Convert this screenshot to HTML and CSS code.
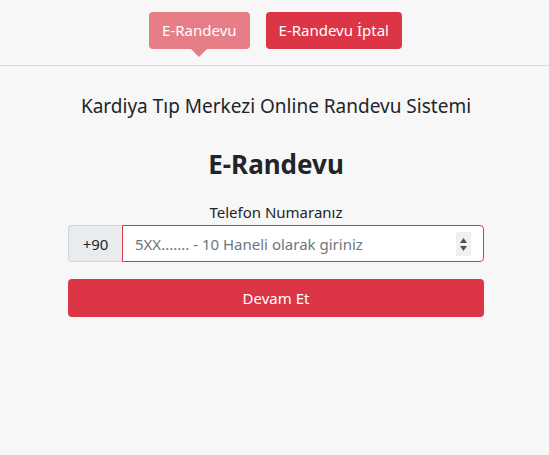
FILE: index.html
```html
<!DOCTYPE html>
<html lang="tr">
<head>
<meta charset="utf-8">
<link rel="stylesheet" href="styles.css">
</head>
<body>
<nav class="topnav">
  <a class="tab tab-active">E-Randevu</a>
  <a class="tab">E-Randevu İptal</a>
</nav>
<main class="content">
  <h5 class="subtitle">Kardiya Tıp Merkezi Online Randevu Sistemi</h5>
  <h3 class="title">E-Randevu</h3>
  <label class="label" for="tel">Telefon Numaranız</label>
  <div class="input-group">
    <span class="prefix">+90</span>
    <div class="field">
      <input id="tel" class="input" type="text" placeholder="5XX....... - 10 Haneli olarak giriniz">
      <span class="spinner">
        <svg width="9" height="18" viewBox="0 0 9 18"><path d="M4.5 3 L8 8 L1 8 Z" fill="#505050"/><path d="M1 11 L8 11 L4.5 16 Z" fill="#505050"/></svg>
      </span>
    </div>
  </div>
  <button class="submit">Devam Et</button>
</main>
</body>
</html>
```
FILE: styles.css
```css
* { box-sizing: border-box; }
body {
  margin: 0;
  background: #f7f7f7;
  font-family: "Noto Sans", "Open Sans", sans-serif;
  color: #212529;
}
.topnav {
  display: flex;
  justify-content: center;
  gap: 16px;
  padding: 12px 0 16px 2px;
  border-bottom: 1px solid #dcdcdc;
  height: 66px;
}
.tab {
  position: relative;
  display: block;
  height: 37px;
  line-height: 37px;
  padding: 0 13px;
  border-radius: 4px;
  background: #dc3545;
  color: #fff;
  font-size: 15px;
  text-decoration: none;
}
.tab-active { background: #e77d87; }
.tab-active::after {
  content: "";
  position: absolute;
  left: 50%;
  bottom: -8px;
  margin-left: -8px;
  border-left: 8px solid transparent;
  border-right: 8px solid transparent;
  border-top: 8px solid #e77d87;
}
.content {
  width: 416px;
  margin-left: 68px;
  display: flex;
  flex-direction: column;
  align-items: stretch;
  text-align: center;
}
.subtitle {
  margin: 27px 0 0;
  font-size: 19px;
  font-weight: 400;
  line-height: 26px;
}
.title {
  margin: 28px 0 0;
  font-size: 26px;
  font-weight: 700;
  line-height: 34px;
}
.label {
  margin-top: 21px;
  font-size: 15px;
  line-height: 20px;
}
.input-group {
  display: flex;
  height: 37px;
  margin-top: 3px;
}
.prefix {
  width: 54px;
  display: flex;
  align-items: center;
  justify-content: center;
  background: #e9ecef;
  border: 1px solid #ced4da;
  border-right: 0;
  border-radius: 4px 0 0 4px;
  font-size: 15px;
}
.field {
  flex: 1;
  display: flex;
  align-items: center;
  background: #fff;
  border: 1px solid #dc3545;
  border-radius: 0 4px 4px 0;
  padding: 0 12px 0 12px;
}
.input {
  flex: 1;
  border: 0;
  outline: 0;
  background: transparent;
  font-family: inherit;
  font-size: 15px;
  color: #495057;
  padding: 0;
}
.input::placeholder { color: #6c757d; }
.spinner {
  width: 15px;
  height: 24px;
  background: #f0f0f0;
  display: flex;
  align-items: center;
  justify-content: center;
}
.submit {
  margin-top: 17px;
  height: 38px;
  border: 0;
  border-radius: 4px;
  background: #dc3545;
  color: #fff;
  font-family: inherit;
  font-size: 15px;
}
```
